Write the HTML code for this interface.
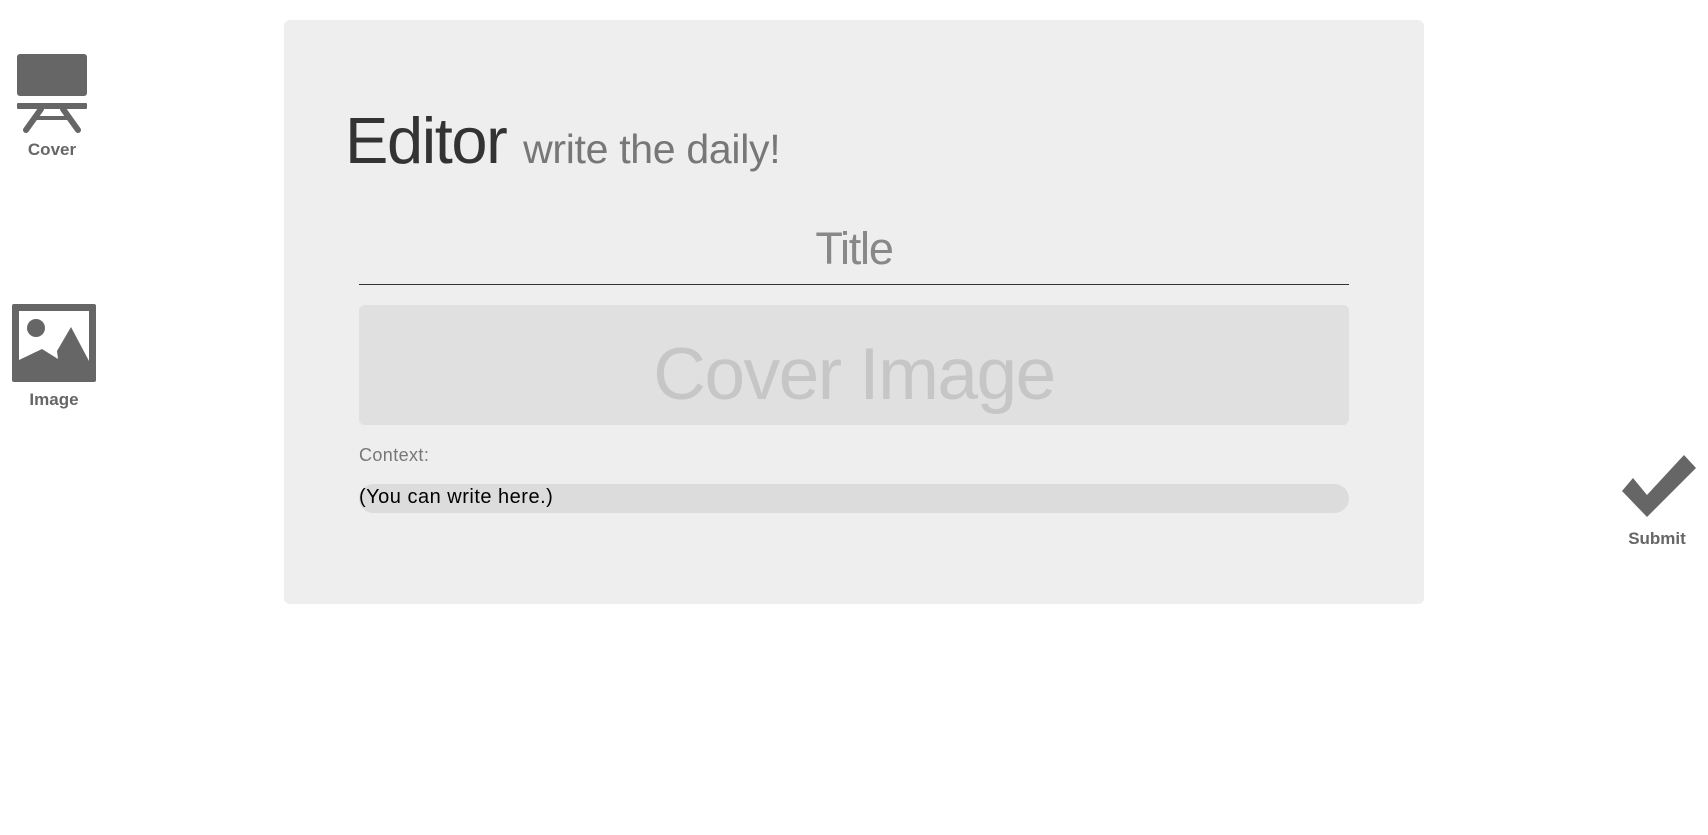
<!DOCTYPE html>
<html><head><style>
body{margin:0;width:1708px;height:835px;background:#fff;font-family:"Liberation Sans",sans-serif;position:relative;overflow:hidden}
.a{position:absolute}
.lbl{position:absolute;font-weight:bold;font-size:17px;color:#666;text-align:center;transform:translateX(-50%);white-space:nowrap}
</style></head><body>
<div class="a" style="left:284px;top:20px;width:1140px;height:584px;background:#eee;border-radius:6px"></div>
<div class="a" style="left:345px;top:103px;font-size:65px;color:#333;white-space:nowrap;letter-spacing:-1.4px">Editor <span style="font-size:41px;color:#777;letter-spacing:-0.3px">write the daily!</span></div>
<div class="a" style="left:359px;top:223px;width:990px;text-align:center;font-size:45px;color:#888;letter-spacing:-1.2px">Title</div>
<div class="a" style="left:359px;top:284px;width:990px;height:1px;background:#333"></div>
<div class="a" style="left:359px;top:305px;width:990px;height:120px;background:#e0e0e0;border-radius:6px;text-align:center;font-size:73px;line-height:140px;color:#c6c6c6;letter-spacing:-1.5px">Cover Image</div>
<div class="a" style="left:359px;top:445px;font-size:18px;color:#777;letter-spacing:0.4px">Context:</div>
<div class="a" style="left:359px;top:484px;width:990px;height:29px;background:#dcdcdc;border-radius:15px"></div>
<div class="a" style="left:359px;top:486px;font-size:20px;color:#000;letter-spacing:0.5px">(You can write here.)</div>
<svg class="a" style="left:15px;top:52px" width="74" height="82" viewBox="0 0 74 82">
<rect x="2" y="2" width="70" height="42" rx="3" fill="#666"/>
<rect x="2" y="51" width="70" height="6" rx="1" fill="#666"/>
<path d="M26 57 L11 78 M48 57 L63 78" stroke="#666" stroke-width="6" stroke-linecap="round"/>
<rect x="22" y="64" width="30" height="4" fill="#666"/>
</svg>
<div class="lbl" style="left:52px;top:140px">Cover</div>
<svg class="a" style="left:12px;top:304px" width="84" height="78" viewBox="0 0 84 78">
<rect x="0" y="0" width="84" height="78" rx="2" fill="#666"/>
<path d="M7 7 H77 V57 L59 23 L45 47 L46 55 L30 45 L7 56 Z" fill="#fff"/>
<circle cx="24" cy="24" r="9" fill="#666"/>
</svg>
<div class="lbl" style="left:54px;top:390px">Image</div>
<svg class="a" style="left:1620px;top:454px" width="78" height="64" viewBox="0 0 78 64">
<path d="M2 37 L13 24 L27 41 L64 1 L76 14 L27 63 Z" fill="#666"/>
</svg>
<div class="lbl" style="left:1657px;top:529px">Submit</div>
</body></html>
